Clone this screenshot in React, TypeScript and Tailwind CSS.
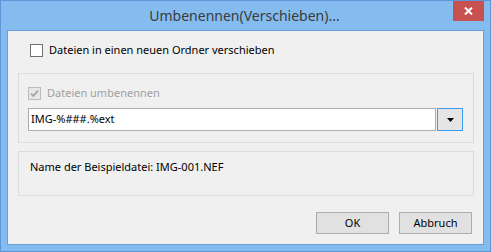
import React from "react";

const font = { fontFamily: '"Noto Sans", "Open Sans", sans-serif' };

const CheckBox: React.FC<{ checked?: boolean; disabled?: boolean }> = ({
  checked,
  disabled,
}) => (
  <div
    className={`w-[13px] h-[13px] shrink-0 border flex items-center justify-center ${
      disabled ? "border-[#bcbcbc] bg-[#e6e6e6]" : "border-[#707070] bg-white"
    }`}
  >
    {checked && (
      <svg width="9" height="9" viewBox="0 0 9 9">
        <path
          d="M1 4.6 L3.4 7 L8 1.6"
          fill="none"
          stroke={disabled ? "#a3a3a3" : "#222"}
          strokeWidth="1.7"
        />
      </svg>
    )}
  </div>
);

const DialogButton: React.FC<{ children: React.ReactNode }> = ({ children }) => (
  <button className="w-[73px] h-[22px] border border-[#adadad] bg-[#e1e1e1] text-[11px] text-black flex items-center justify-center">
    {children}
  </button>
);

export default function App() {
  return (
    <div
      style={font}
      className="w-[491px] h-[252px] bg-[#85bcef] border border-[#5e96d8] flex flex-col relative"
    >
      {/* title bar */}
      <div className="h-[29px] shrink-0 flex items-center justify-center relative">
        <span className="text-[14px] text-[#3a3a3a] pr-[2px]">
          Umbenennen(Verschieben)...
        </span>
        <div className="absolute right-[6px] top-0 w-[31px] h-[20px] bg-[#c75050] flex items-center justify-center">
          <svg width="9" height="8" viewBox="0 0 9 8">
            <path d="M1 0.5 L8 7.5 M8 0.5 L1 7.5" stroke="#fff" strokeWidth="2" />
          </svg>
        </div>
      </div>

      {/* client area */}
      <div className="flex-1 mx-[6px] mb-[6px] border border-[#6a9ddc] bg-[#f0f0f0] flex flex-col">
        <div className="h-[17px] mt-[11px] ml-[22px] flex items-center gap-[6px] text-[11px] text-black">
          <CheckBox />
          <span>Dateien in einen neuen Ordner verschieben</span>
        </div>

        <div className="w-[456px] h-[70px] ml-[10px] mt-[14px] border border-[#dcdcdc] pl-[9px] pr-[10px] pt-[12px] flex flex-col">
          <div className="h-[15px] flex items-center gap-[6px] text-[11px] text-[#a0a0a0]">
            <CheckBox checked disabled />
            <span>Dateien umbenennen</span>
          </div>
          <div className="flex mt-[7px] h-[23px]">
            <div className="flex-1 border border-[#abadb3] bg-white flex items-center pl-[2px] text-[11px] text-black">
              IMG-%###.%ext
            </div>
            <div className="w-[26px] ml-[1px] border border-[#3c9cf0] bg-[#e5e5e5] flex items-center justify-center">
              <svg width="7" height="4" viewBox="0 0 7 4">
                <path d="M0 0 H7 L3.5 4 Z" fill="#000" />
              </svg>
            </div>
          </div>
        </div>

        <div className="w-[456px] h-[45px] ml-[10px] mt-[8px] border border-[#dcdcdc] pl-[11px] pt-[7px] text-[11px] text-black">
          Name der Beispieldatei: IMG-001.NEF
        </div>

        <div className="mt-[16px] flex justify-end gap-[10px] pr-[11px]">
          <DialogButton>OK</DialogButton>
          <DialogButton>Abbruch</DialogButton>
        </div>
      </div>
    </div>
  );
}
